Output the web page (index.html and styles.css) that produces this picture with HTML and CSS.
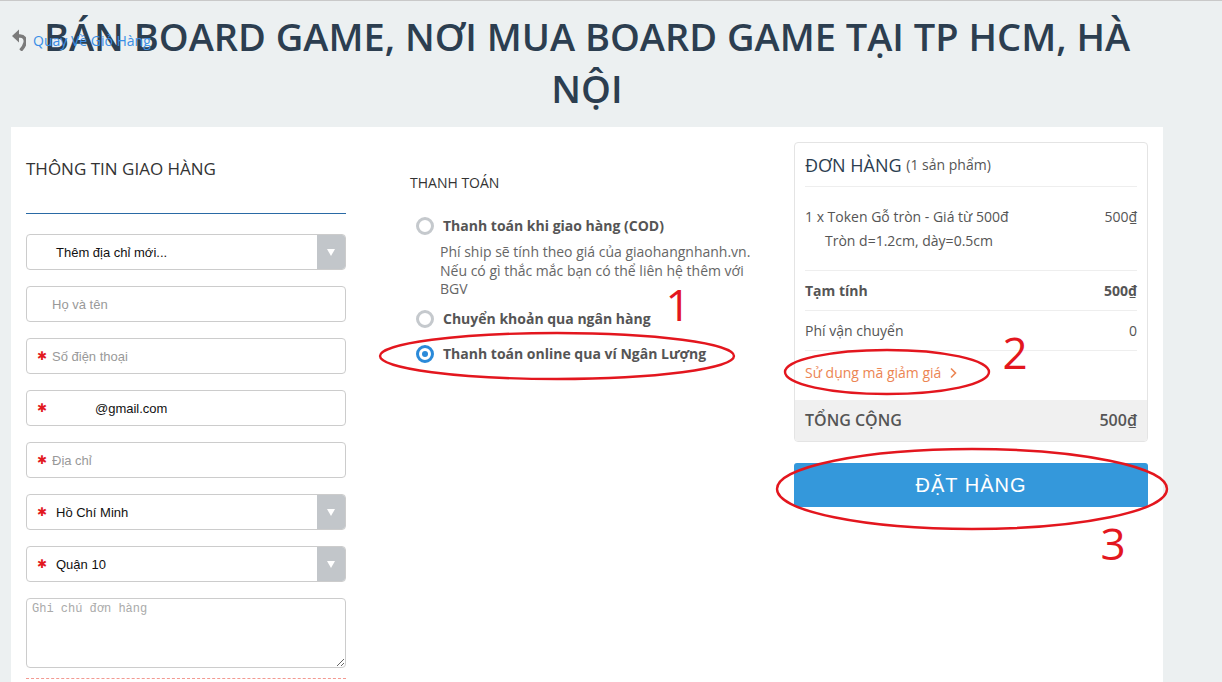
FILE: index.html
```html
<!DOCTYPE html>
<html lang="vi">
<head>
    <meta charset="utf-8">
    <title>Thanh toán - Bán Board Game</title>
    <link rel="stylesheet" href="styles.css">
</head>
<body>
    <div class="page">
        <h1 class="shop-title">BÁN BOARD GAME, NƠI MUA BOARD GAME TẠI TP HCM, HÀ NỘI</h1>

        <div class="checkout">
            <div class="col">
                <h2 class="shipping-title">THÔNG TIN GIAO HÀNG</h2>
                <div class="shipping-form">
                    <div class="field select">
                        <span class="select-value">Thêm địa chỉ mới...</span>
                        <span class="select-arrow"></span>
                    </div>
                    <div class="field">
                        <input type="text" placeholder="Họ và tên">
                    </div>
                    <div class="field required">
                        <input type="text" placeholder="Số điện thoại">
                    </div>
                    <div class="field required email">
                        <input type="text" value="@gmail.com">
                    </div>
                    <div class="field required">
                        <input type="text" placeholder="Địa chỉ">
                    </div>
                    <div class="field select required">
                        <span class="select-value">Hồ Chí Minh</span>
                        <span class="select-arrow"></span>
                    </div>
                    <div class="field select required">
                        <span class="select-value">Quận 10</span>
                        <span class="select-arrow"></span>
                    </div>
                    <textarea class="note" placeholder="Ghi chú đơn hàng"></textarea>
                    <div class="form-end"></div>
                </div>
            </div>

            <div class="col">
                <h2 class="payment-title">THANH TOÁN</h2>
                <div class="pay-option has-desc">
                    <span class="radio"></span>
                    Thanh toán khi giao hàng (COD)
                </div>
                <div class="pay-desc">Phí ship sẽ tính theo giá của giaohangnhanh.vn. Nếu có gì thắc mắc bạn có thể liên hệ thêm với BGV</div>
                <div class="pay-option">
                    <span class="radio"></span>
                    Chuyển khoản qua ngân hàng
                </div>
                <div class="pay-option">
                    <span class="radio checked"></span>
                    Thanh toán online qua ví Ngân Lượng
                </div>
            </div>

            <div class="col">
                <div class="order-box">
                    <h2 class="order-head">ĐƠN HÀNG <span class="order-count">(1 sản phẩm)</span></h2>
                    <div class="order-item">
                        <div>
                            <div>1 x Token Gỗ tròn - Giá từ 500đ</div>
                            <div class="item-variant">Tròn d=1.2cm, dày=0.5cm</div>
                        </div>
                        <div>500₫</div>
                    </div>
                    <div class="order-row subtotal">
                        <span>Tạm tính</span>
                        <span>500₫</span>
                    </div>
                    <div class="order-row">
                        <span>Phí vận chuyển</span>
                        <span>0</span>
                    </div>
                    <a class="coupon" href="#">Sử dụng mã giảm giá
                        <svg width="8" height="12" viewBox="0 0 8 12"><path d="M2 1.5 L6.5 6 L2 10.5" fill="none" stroke="#ec8553" stroke-width="1.6"/></svg>
                    </a>
                    <div class="order-total">
                        <span>TỔNG CỘNG</span>
                        <span>500₫</span>
                    </div>
                </div>
                <button class="place-order">ĐẶT HÀNG</button>
            </div>
        </div>
    </div>

    <a class="back-link" href="#">
        <svg class="back-icon" width="14" height="22" viewBox="0 0 14 22">
            <polygon points="0,7 7,0.5 7,13.5" fill="#7b7b7b"/>
            <path d="M6 7 H8 C12 7 14 10 13 14 C12.3 17 10.5 19.5 8.5 21.5" fill="none" stroke="#7b7b7b" stroke-width="3.4"/>
        </svg>
        Quay Về Giỏ Hàng
    </a>

    <svg class="annotations" width="1222" height="682" viewBox="0 0 1222 682">
        <g fill="none" stroke="#e3161e" stroke-width="2.4">
            <ellipse cx="557" cy="356" rx="177" ry="23"/>
            <ellipse cx="887" cy="372" rx="102" ry="22"/>
            <ellipse cx="972" cy="489" rx="195" ry="40"/>
        </g>
        <g fill="#e3161e" font-family="Open Sans, sans-serif" font-size="44" text-anchor="middle">
            <text x="678" y="321">1</text>
            <text x="1015" y="369">2</text>
            <text x="1113" y="560">3</text>
        </g>
    </svg>
</body>
</html>
```

FILE: styles.css
```css
body {
    margin: 0;
    background: #ecf0f1;
    border-top: 1px solid #c9c9c9;
    font-family: "Open Sans", "Liberation Sans", sans-serif;
    color: #333;
}

.page {
    width: 1152px;
    margin-left: 11px;
}

.back-link {
    position: absolute;
    left: 12px;
    top: 29px;
    z-index: 2;
    display: flex;
    align-items: center;
    gap: 7px;
    font-size: 14px;
    color: #3a8ee6;
    text-decoration: none;
}

.shop-title {
    margin: 0 0 13px;
    padding-top: 9px;
    font-size: 38px;
    font-weight: 600;
    line-height: 52px;
    text-align: center;
    color: #2c3e50;
}

.checkout {
    display: grid;
    grid-template-columns: repeat(3, 1fr);
    min-height: 560px;
    background: #fff;
}

.col {
    padding: 0 15px;
}

/* shipping */
.shipping-title {
    width: 320px;
    margin: 30px 0 0;
    padding-bottom: 32px;
    border-bottom: 1px solid #2a6aa5;
    font-size: 17px;
    font-weight: 400;
    line-height: 24px;
}

.shipping-form {
    width: 320px;
    margin-top: 20px;
}

.field {
    position: relative;
    display: flex;
    align-items: center;
    height: 36px;
    margin-bottom: 16px;
    box-sizing: border-box;
    border: 1px solid #ccc;
    border-radius: 4px;
    font-family: "Liberation Sans", Arial, sans-serif;
    font-size: 13px;
    color: #111;
}

.field input {
    width: 100%;
    height: 100%;
    box-sizing: border-box;
    padding: 0 10px 0 25px;
    border: none;
    border-radius: 4px;
    background: transparent;
    font: inherit;
    color: inherit;
    outline: none;
}

.field input::placeholder {
    color: #999;
}

.field.email input {
    padding-left: 68px;
}

.field.required::before {
    content: "✱";
    position: absolute;
    left: 10px;
    top: 50%;
    transform: translateY(-50%);
    font-family: "DejaVu Sans", sans-serif;
    font-size: 12px;
    color: #e2191f;
}

.select-value {
    padding-left: 29px;
}

.select-arrow {
    position: absolute;
    top: 0;
    right: 0;
    bottom: 0;
    width: 28px;
    background: #c2c6ca;
    border-radius: 0 3px 3px 0;
}

.select-arrow::after {
    content: "";
    position: absolute;
    left: 10px;
    top: 14px;
    border-left: 4px solid transparent;
    border-right: 4px solid transparent;
    border-top: 7px solid #fff;
}

.note {
    display: block;
    width: 320px;
    height: 70px;
    box-sizing: border-box;
    padding: 3px 5px;
    border: 1px solid #ccc;
    border-radius: 4px;
    font-family: "Liberation Mono", monospace;
    font-size: 12px;
    line-height: 15px;
}

.note::placeholder {
    color: #aaa;
}

.form-end {
    margin-top: 10px;
    border-top: 1px dashed #f39a92;
}

/* payment */
.payment-title {
    margin: 46px 0 23px;
    font-size: 14px;
    font-weight: 400;
    line-height: 20px;
}

.pay-option {
    display: flex;
    align-items: center;
    margin-bottom: 15px;
    font-size: 14px;
    font-weight: 700;
    line-height: 20px;
    color: #555;
}

.pay-option.has-desc {
    margin-bottom: 7px;
}

.radio {
    position: relative;
    width: 18px;
    height: 18px;
    margin: 0 9px 0 6px;
    box-sizing: border-box;
    border: 3px solid #c5c9cd;
    border-radius: 50%;
}

.radio.checked {
    border-color: #2b8ad9;
}

.radio.checked::after {
    content: "";
    position: absolute;
    left: 3px;
    top: 3px;
    width: 6px;
    height: 6px;
    border-radius: 50%;
    background: #2b8ad9;
}

.pay-desc {
    margin: 0 0 10px 30px;
    font-size: 14px;
    line-height: 18.5px;
    color: #666;
}

/* order */
.order-box {
    margin-top: 15px;
    border: 1px solid #e4e4e4;
    border-radius: 4px;
    overflow: hidden;
    color: #555;
}

.order-head {
    margin: 0 10px;
    padding: 10px 0 7px;
    border-bottom: 1px solid #eee;
    font-size: 18px;
    font-weight: 400;
    line-height: 24px;
    color: #2c3e50;
}

.order-count {
    position: relative;
    top: -2px;
    font-size: 14px;
    color: #555;
}

.order-item {
    display: flex;
    justify-content: space-between;
    margin: 0 10px;
    padding: 18px 0 17px;
    border-bottom: 1px solid #eee;
    font-size: 14px;
    line-height: 24px;
}

.item-variant {
    padding-left: 20px;
}

.order-row {
    display: flex;
    justify-content: space-between;
    margin: 0 10px;
    padding: 10px 0;
    border-bottom: 1px solid #eee;
    font-size: 14px;
    line-height: 19px;
}

.order-row.subtotal {
    font-weight: 700;
}

.coupon {
    display: flex;
    align-items: center;
    gap: 8px;
    margin: 0 10px;
    padding: 12px 0 17px;
    font-size: 14px;
    line-height: 20px;
    color: #ec8553;
    text-decoration: none;
}

.order-total {
    display: flex;
    justify-content: space-between;
    padding: 10px;
    background: #f0f0f0;
    font-size: 16px;
    font-weight: 600;
    line-height: 21px;
}

.place-order {
    display: block;
    width: 100%;
    height: 44px;
    margin-top: 21px;
    border: none;
    border-radius: 3px;
    background: #3498db;
    color: #fff;
    font-family: "Liberation Sans", Arial, sans-serif;
    font-size: 20px;
    letter-spacing: 1px;
}

.annotations {
    position: absolute;
    top: 0;
    left: 0;
    pointer-events: none;
}
```
